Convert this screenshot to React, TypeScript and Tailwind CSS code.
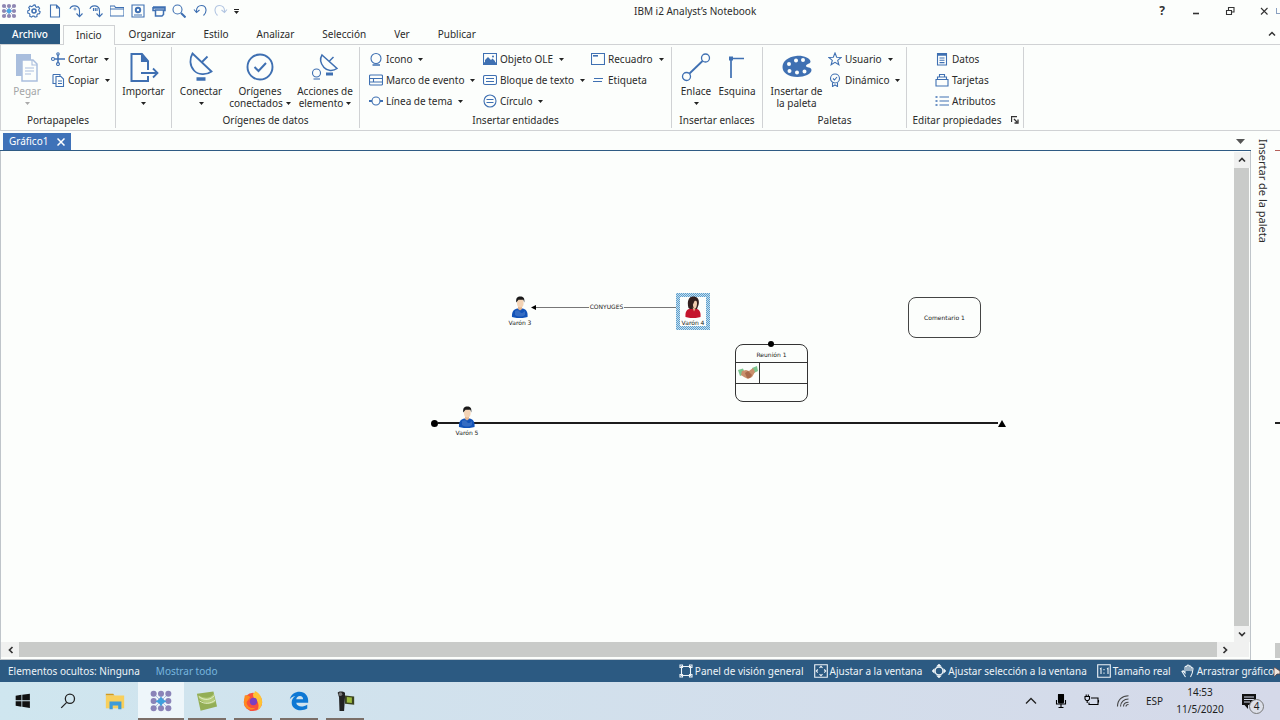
import type { ReactNode } from 'react';

interface IconProps {
  size?: number;
  box?: number;
  className?: string;
  children: ReactNode;
}

function Icon({ size = 14, box = 14, className = 'text-[#3f70b2]', children }: IconProps) {
  return (
    <svg
      width={size}
      height={size}
      viewBox={`0 0 ${box} ${box}`}
      fill="none"
      stroke="currentColor"
      strokeWidth="1.1"
      aria-hidden="true"
      className={`shrink-0 ${className}`}
    >
      {children}
    </svg>
  );
}

function Caret({ className = 'text-[#222]' }: { className?: string }) {
  return (
    <svg width="5" height="3" viewBox="0 0 5 3" fill="currentColor" aria-hidden="true" className={`shrink-0 ${className}`}>
      <path d="M0 0h5L2.5 3z" />
    </svg>
  );
}

/* ---------- quick access bar ---------- */

const dots = [3, 8, 13];

function AppLogo({ size = 16 }: { size?: number }) {
  return (
    <svg width={size} height={size} viewBox="0 0 16 16" aria-hidden="true" className="shrink-0">
      <path d="M8 3v10M3 8h10M3 3l10 10M13 3L3 13" stroke="#a9b4d6" strokeWidth="1" />
      {dots.map((y) =>
        dots.map((x) => (
          <circle key={`${x}-${y}`} cx={x} cy={y} r="2.1" fill={x === 8 && y === 8 ? '#3d9be0' : '#8f87b3'} />
        ))
      )}
      <path d="M8 4.6l1 2.4 2.6 1-2.6 1-1 2.4-1-2.4-2.6-1 2.6-1z" fill="#49a7e6" />
    </svg>
  );
}

const quickActions = [
  {
    name: 'Opciones',
    icon: (
      <>
        <path d="M7 .9l1.2.2.4 1.6 1.2.6 1.5-.7 1.3 1.7-.9 1.3.2 1.4 1.3.8-.7 2-1.7.1-.9 1 .1 1.7-2 .6-1-1.2-1.3.1-1.2 1.1-1.8-1 .3-1.6-.7-1.1L.8 9l-.1-2.1 1.6-.7.3-1.3-.9-1.4 1.4-1.5 1.5.7 1.2-.6z" />
        <circle cx="7" cy="7" r="2" strokeWidth="1.6" />
      </>
    )
  },
  { name: 'Nuevo', icon: <path d="M2.5 1h6l3 3v9h-9zM8.5 1v3h3" /> },
  {
    name: 'Paso',
    icon: (
      <>
        <path d="M1 5C2 .6 10.500 .4 10.500 7v5M7.500 9.500l3 3.200 3-3.200" />
        <circle cx="6" cy="5" r="1" strokeWidth=".8" />
      </>
    )
  },
  { name: 'Todos los pasos', icon: <path d="M1 5C2 .6 10.500 .4 10.500 7v5M7.500 9.500l3 3.200 3-3.200M4.500 4v3M6.300 4v3M8 4v3" /> },
  { name: 'Abrir', icon: <path d="M0 12V2h4.500l1 1.500H14V12zM0 5h14" /> },
  {
    name: 'Guardar',
    icon: (
      <>
        <path d="M1 1h12v12H1zM3 11h8" />
        <circle cx="7" cy="6" r="2.200" strokeWidth="2" />
      </>
    )
  },
  { name: 'Imprimir', icon: <path d="M1 3h12v3.500h-1.500M1 3v3.500h2.500M1 4h12M3.500 6v6h6.500l1.500-1.500V6z" strokeWidth="1.500" /> },
  {
    name: 'Buscar',
    icon: (
      <>
        <circle cx="5.500" cy="5.500" r="4.500" />
        <path d="M9 9l4.500 4.500" strokeWidth="2" />
      </>
    )
  },
  { name: 'Deshacer', icon: <path d="M1 5.500l2.500 3 3-2.500M3.500 8C3 3 6 1.500 8.500 1.500c5 0 6 6.500 2 10" /> }
];

function TitleBar() {
  return (
    <header className="relative flex h-6 items-center pr-[10px] pb-0.5 pl-px">
      <AppLogo />
      <div className="ml-[10px] flex w-[201px] items-center justify-between">
        {quickActions.map((action) => (
          <button key={action.name} type="button" aria-label={action.name}>
            <Icon>{action.icon}</Icon>
          </button>
        ))}
        <button type="button" aria-label="Rehacer" disabled>
          <Icon className="text-[#b3c6e2]">
            <path d="M13 5.500l-2.500 3-3-2.500M10.500 8C11 3 8 1.500 5.500 1.500c-5 0-6 6.500-2 10" />
          </Icon>
        </button>
      </div>
      <button type="button" aria-label="Personalizar barra" className="ml-[6px] flex flex-col items-center gap-px">
        <span className="h-px w-[5px] bg-[#222]" />
        <Caret />
      </button>
      <h1 className="ml-[395px] whitespace-nowrap">IBM i2 Analyst’s Notebook</h1>
      <div className="ml-auto flex items-center gap-[22px] text-[#333]">
        <button type="button" className="w-3 text-xs font-bold">?</button>
        <button type="button" aria-label="Minimizar">
          <Icon size={12} box={12} className="text-[#333]"><path d="M3 8.500h6" strokeWidth="1.600" /></Icon>
        </button>
        <button type="button" aria-label="Restaurar">
          <Icon size={12} box={12} className="text-[#333]">
            <path d="M2.500 5.500h5v4h-5zM4.500 5V2.500H10V7H7.500" />
          </Icon>
        </button>
        <button type="button" aria-label="Cerrar">
          <Icon size={12} box={12} className="text-[#333]"><path d="M3 3l6.500 6.500M9.500 3L3 9.500" /></Icon>
        </button>
      </div>
      <span className="absolute top-2 right-0 h-1.5 w-1 border-l border-b border-[#8aa0c0]" />
    </header>
  );
}

const tabs = ['Organizar', 'Estilo', 'Analizar', 'Selección', 'Ver', 'Publicar'];

function RibbonTabs() {
  return (
    <nav className="flex h-[21px] items-stretch border-b border-[#d0d2d4] pr-1">
      <button type="button" className="w-[60px] bg-[#2b5a82] font-medium text-white">Archivo</button>
      <button type="button" className="relative top-px ml-[3px] border border-b-0 border-[#d0d2d4] bg-[#fcfefc] px-3">Inicio</button>
      <div className="flex">
        {tabs.map((tab) => (
          <button key={tab} type="button" className="px-3.5">{tab}</button>
        ))}
      </div>
      <button type="button" aria-label="Contraer la cinta" className="ml-auto">
        <Icon size={8} box={8} className="text-[#333]"><path d="M1 5.500l3-3 3 3" strokeWidth="1.500" /></Icon>
      </button>
    </nav>
  );
}

/* ---------- ribbon ---------- */

function Group({ title, width, launcher, children }: { title: string; width: string; launcher?: boolean; children: ReactNode }) {
  return (
    <section className={`flex shrink-0 flex-col border-r border-[#d0d2d4] pt-0.5 ${width}`}>
      <div className="flex flex-1">{children}</div>
      <div className="relative h-4 text-center leading-4">
        <span className={launcher ? 'pr-4' : ''}>{title}</span>
        {launcher && (
          <button type="button" aria-label="Abrir propiedades" className="absolute top-1 right-1">
            <Icon size={8} box={8} className="text-[#333]"><path d="M.5 6V.5H6M3 3l3 3M7 3.500V7H3.500" strokeWidth="1.300" /></Icon>
          </button>
        )}
      </div>
    </section>
  );
}

interface LargeProps {
  width: string;
  lines: string[];
  caret?: boolean;
  disabled?: boolean;
  children: ReactNode;
}

function LargeButton({ width, lines, caret, disabled, children }: LargeProps) {
  const caretColor = disabled ? 'text-[#aaa]' : 'text-[#222]';
  return (
    <button
      type="button"
      disabled={disabled}
      className={`flex flex-col items-center pt-0.5 leading-3 whitespace-nowrap ${width} ${disabled ? 'text-[#a3a5a6]' : ''}`}
    >
      <span className="mb-0.5 flex h-8 items-center justify-center">{children}</span>
      <span>{lines[0]}</span>
      {lines.length > 1 ? (
        <span className="flex items-center gap-[3px]">
          {lines[1]}
          {caret && <Caret className={caretColor} />}
        </span>
      ) : (
        caret && <span className="flex h-3 items-center"><Caret className={caretColor} /></span>
      )}
    </button>
  );
}

function SmallButton({ label, caret, children }: { label: string; caret?: boolean; children: ReactNode }) {
  return (
    <button type="button" className="flex h-5 items-center whitespace-nowrap">
      <Icon>{children}</Icon>
      <span className="ml-[3px]">{label}</span>
      {caret && <span className="ml-1.5"><Caret /></span>}
    </button>
  );
}

function Ribbon() {
  return (
    <div className="flex h-[86px] items-stretch overflow-hidden border-b border-l border-[#d0d2d4] py-0.5">
      <Group title="Portapapeles" width="w-[115px]">
        <LargeButton width="w-[50px] pl-0.5" lines={['Pegar']} caret disabled>
          <Icon size={30} box={30} className="text-[#a9bedd]">
            <path d="M4 2h15v22H4z" fill="#a9bedd" stroke="none" />
            <path d="M10 8h11l4 4v17H10z" fill="#fcfefc" strokeWidth="1.500" />
            <path d="M20 8v5h5M13 16h9M13 19h9M13 22h6" />
          </Icon>
        </LargeButton>
        <div className="flex flex-col gap-px">
          <SmallButton label="Cortar" caret>
            <path d="M3.500 7H14M7 2.500v9" strokeWidth="1.500" />
            <circle cx="2" cy="7" r="1.500" />
            <circle cx="7" cy="12" r="1.500" />
            <circle cx="7" cy="2" r="1.200" />
          </SmallButton>
          <SmallButton label="Copiar" caret>
            <path d="M2 1.500h7v2M2 1.500v9h2.500M5 3.500h5l2.500 2.500v7.500H5zM7 8h4M7 10.500h4" />
          </SmallButton>
        </div>
      </Group>

      <Group title="" width="w-14">
        <LargeButton width="w-full" lines={['Importar']} caret>
          <Icon size={30} box={30}>
            <path d="M19 24v5H2.500V2H13l6 7v9" strokeWidth="2" />
            <path d="M12.500 2l6.500 7.500h-6.500z" fill="currentColor" />
            <path d="M12 21h16M24 16.500l4.500 4.500-4.500 4.500" strokeWidth="1.800" />
          </Icon>
        </LargeButton>
      </Group>

      <Group title="Orígenes de datos" width="w-[188px]">
        <LargeButton width="ml-px w-14" lines={['Conectar']} caret>
          <Icon size={30} box={30}>
            <path d="M6.500 1.500L25.500 19.500C20 23.500 12 23 8 18.500 3.500 13.500 3.500 6.500 6.500 1.500zM15.500 10.500l6-6" strokeWidth="1.800" />
            <path d="M10.500 27h9" strokeWidth="3.500" />
          </Icon>
        </LargeButton>
        <LargeButton width="w-[62px]" lines={['Orígenes', 'conectados']} caret>
          <Icon size={30} box={30}>
            <circle cx="15" cy="15" r="12.500" strokeWidth="1.900" />
            <path d="M9.500 15l4 4 7.500-8" strokeWidth="2" />
          </Icon>
        </LargeButton>
        <LargeButton width="w-[68px]" lines={['Acciones de', 'elemento']} caret>
          <Icon size={30} box={30}>
            <path d="M12 3l15 13.500c-4 3-10 2.500-13-1S9.500 7 12 3zM19 9.500l4.500-4.500" strokeWidth="1.500" />
            <path d="M16 22h7" strokeWidth="3" />
            <circle cx="6.500" cy="21" r="4" />
            <path d="M3.500 27h6.500" />
          </Icon>
        </LargeButton>
      </Group>

      <Group title="Insertar entidades" width="w-[312px]">
        <div className="ml-[9px] grid grid-cols-[114px_108px_auto] content-start gap-y-px">
          <SmallButton label="Icono" caret>
            <circle cx="7" cy="6.500" r="5" />
            <path d="M3.500 13h7.500" strokeWidth="1.500" />
          </SmallButton>
          <SmallButton label="Objeto OLE" caret>
            <path d="M.5 1.500h13v11H.5z" />
            <path d="M2 11V8l3-3 3 3 1.500-1.500L12 9v2z" fill="currentColor" stroke="none" />
            <path d="M.5 11.500h13" strokeWidth="2.500" />
            <circle cx="10" cy="4.500" r="1" fill="currentColor" stroke="none" />
          </SmallButton>
          <SmallButton label="Recuadro" caret>
            <path d="M.5 1.500h13v11H.5z" />
            <path d="M2 3.800h5" strokeWidth="1.600" />
          </SmallButton>
          <SmallButton label="Marco de evento" caret>
            <rect x=".5" y="2" width="13" height="10" rx="1" />
            <path d="M.5 5.500h13M.5 9h13M4.500 5.500V9" />
          </SmallButton>
          <SmallButton label="Bloque de texto" caret>
            <rect x=".5" y="2.500" width="13" height="9" rx="1.500" />
            <path d="M3 5.500h8M3 8.500h8" />
          </SmallButton>
          <SmallButton label="Etiqueta">
            <path d="M3 5.500h9M2 8.500h9" />
          </SmallButton>
          <SmallButton label="Línea de tema" caret>
            <circle cx="7" cy="7" r="4" />
            <path d="M0 7h3M11 7h3" strokeWidth="1.800" />
          </SmallButton>
          <SmallButton label="Círculo" caret>
            <circle cx="7" cy="7" r="6" />
            <path d="M3.500 5.500h7M3.500 8.500h7" />
          </SmallButton>
        </div>
      </Group>

      <Group title="Insertar enlaces" width="w-[91px]">
        <LargeButton width="ml-1 w-10" lines={['Enlace']} caret>
          <Icon size={30} box={30}>
            <circle cx="24.500" cy="6" r="4" strokeWidth="1.300" />
            <circle cx="5.500" cy="24.500" r="4" strokeWidth="1.300" />
            <path d="M8.500 21.500l13-12.500" strokeWidth="1.800" />
          </Icon>
        </LargeButton>
        <LargeButton width="w-[42px]" lines={['Esquina']}>
          <Icon size={30} box={30}>
            <path d="M9 26V6.500H22" strokeWidth="1.700" />
            <path d="M7 4.500h4v4H7z" fill="currentColor" stroke="none" />
          </Icon>
        </LargeButton>
      </Group>

      <Group title="Paletas" width="w-[144px]">
        <LargeButton width="ml-0.5 w-[63px]" lines={['Insertar de', 'la paleta']}>
          <Icon size={30} box={30}>
            <path
              fillRule="evenodd"
              d="M14 4c7-.8 14 2 14.500 5.500.2 2.500-4.500 2.200-4.500 4.500 0 2 5.500.5 5.500 4 0 4-7 7-14 7C6 25 .5 20.500 .5 15S6 5 14 4zM14 6.500a2 2 0 100 4 2 2 0 000-4zM21 6a2 2 0 100 4 2 2 0 000-4zM7 10a2 2 0 100 4 2 2 0 000-4zM7.500 17a2 2 0 100 4 2 2 0 000-4zM15 18.500a2 2 0 100 4 2 2 0 000-4zM22.500 17.500a2 2 0 100 4 2 2 0 000-4z"
              fill="currentColor"
              stroke="none"
            />
          </Icon>
        </LargeButton>
        <div className="flex flex-col gap-px">
          <SmallButton label="Usuario" caret>
            <path d="M7 1l1.700 4.200 4.500.3-3.500 2.900 1.200 4.400L7 10.400l-3.900 2.400 1.200-4.400L.8 5.500l4.500-.3z" />
          </SmallButton>
          <SmallButton label="Dinámico" caret>
            <circle cx="7" cy="5.500" r="4.500" />
            <path d="M5 5.500l1.500 1.500 2.500-3M4.500 9.500v4L7 12l2.500 1.500v-4" />
          </SmallButton>
        </div>
      </Group>

      <Group title="Editar propiedades" width="w-[117px]" launcher>
        <div className="ml-7 flex flex-col gap-px">
          <SmallButton label="Datos">
            <path d="M2.500 1.500h9v11.500h-9zM4.500 6h5M4.500 8.300h5M4.500 10.600h5" />
            <path d="M2.500 2.500h9" strokeWidth="2.500" />
          </SmallButton>
          <SmallButton label="Tarjetas">
            <path d="M1 6.500h12V13H1zM2.500 6.500V4h9v2.500M4.500 4V1.500h5V4" />
          </SmallButton>
          <SmallButton label="Atributos">
            <path d="M4.500 3H14M4.500 7H14M4.500 11H14" />
            <path d="M.5 3h2M.5 7h2M.5 11h2" strokeWidth="1.500" />
          </SmallButton>
        </div>
      </Group>
    </div>
  );
}

/* ---------- chart ---------- */

function Man() {
  return (
    <svg width="18" height="22" viewBox="0 0 18 22" aria-hidden="true">
      <path d="M1 21C.5 15.500 3 13 6.500 12.500h5c3.500.5 5.500 3 5 8.500-4 1.500-11.500 1.500-15.500 0z" fill="#1253b8" />
      <path d="M4 15c2-1.500 4-1 5 1s3 1 5-1v4c-3 2-7 2-10 0z" fill="#fff" opacity=".15" />
      <path d="M7 9h4v4L9 14.500 7 13z" fill="#e3b48e" />
      <ellipse cx="9.300" cy="7" rx="3.300" ry="4.500" fill="#f3d3b5" />
      <path d="M5.300 6.500C4.600 2 6.500 .5 9.300 .5S14 2 13.200 6.500l-.8-2.700H7.500z" fill="#1a1a1a" />
    </svg>
  );
}

function Woman() {
  return (
    <svg width="18" height="22" viewBox="0 0 18 22" aria-hidden="true">
      <path d="M1.500 21C1 15.500 3 13 6.500 12.500h5c3.500.5 5.500 3 5 8.500-4 1.500-11 1.500-15 0z" fill="#c4142c" />
      <path d="M4.500 12C2.500 5 5 .5 9 .5s7 2.500 5.500 8.500L13 13H6z" fill="#33201f" />
      <path d="M10.500 5c1.500-1 2.800 0 2.500 3s-1.200 4.500-2.200 4.500-2-2-1.800-4z" fill="#f0cdb0" />
      <path d="M8.500 11.500l3 1-1.500 3z" fill="#e3b48e" />
    </svg>
  );
}

function Entity({ position, label, children }: { position: string; label: string; children: ReactNode }) {
  return (
    <div className={`absolute flex w-[34px] flex-col items-center ${position}`}>
      {children}
      <span className="leading-[10px] whitespace-nowrap">{label}</span>
    </div>
  );
}

function Chart() {
  return (
    <main className="relative min-w-0 flex-1 overflow-hidden font-['DejaVu_Sans',sans-serif] text-[6px] text-[#222]">
      {/* marriage link */}
      <div className="absolute top-[151px] left-[530px] flex w-[146px] items-center">
        <svg width="5" height="5" viewBox="0 0 5 5" aria-hidden="true"><path d="M0 2.500L5 0v5z" /></svg>
        <span className="h-px flex-1 bg-[#777]" />
        <span className="px-px leading-[10px]">CONYUGES</span>
        <span className="h-px flex-1 bg-[#777]" />
      </div>

      {/* theme line */}
      <div className="absolute top-[268px] left-[430px] flex w-[575px] items-center">
        <span className="size-[7px] rounded-full bg-black" />
        <span className="h-0.5 flex-1 bg-[#1c1c1c]" />
        <svg width="8" height="8" viewBox="0 0 8 8" aria-hidden="true"><path d="M0 8L4 1l4 7z" /></svg>
      </div>

      <Entity position="top-[145px] left-[502px]" label="Varón 3"><Man /></Entity>
      <div className="absolute top-[142px] left-[675px] h-[37px] w-[34px] bg-[repeating-conic-gradient(#5c9fcd_0_25%,#c6dfef_0_50%)] bg-size-[2px_2px] p-1">
        <div className="h-full bg-[#fcfefc]" />
      </div>
      <Entity position="top-[145px] left-[675px]" label="Varón 4"><Woman /></Entity>
      <Entity position="top-[255px] left-[449px]" label="Varón 5"><Man /></Entity>

      {/* event frame */}
      <div className="absolute top-[193px] left-[734px] flex h-[58px] w-[73px] flex-col rounded-lg border border-[#333]">
        <span className="absolute -top-1 left-8 size-[6px] rounded-full bg-black" />
        <div className="flex h-[17px] items-center justify-center pt-0.5">Reunión 1</div>
        <div className="flex h-[22px] border-y border-[#333]">
          <div className="flex w-6 items-center justify-center border-r border-[#333]">
            <svg width="20" height="16" viewBox="0 0 20 16" aria-hidden="true">
              <path d="M0 5l5-1.500 2 5L2 11z" fill="#7cc58e" />
              <path d="M14 3l5-2 1 5-4 2z" fill="#7cc58e" />
              <path d="M4 6l4-1 3 1 4-3 2 4-3 5-4 2-4-2-3-2z" fill="#c98f6c" />
              <path d="M7 8l3-2 4 4-2 3-3 0z" fill="#a9694b" />
            </svg>
          </div>
        </div>
      </div>

      {/* text block */}
      <div className="absolute top-[146px] left-[907px] flex h-[41px] w-[73px] items-center justify-center rounded-lg border border-[#444]">
        Comentario 1
      </div>
    </main>
  );
}

function ScrollArrow({ name, d }: { name: string; d: string }) {
  return (
    <button type="button" aria-label={name} className="flex size-4 shrink-0 items-center justify-center bg-[#f0f1f0]">
      <Icon size={8} box={8} className="text-[#333]"><path d={d} strokeWidth="1.700" /></Icon>
    </button>
  );
}

function Workspace() {
  return (
    <div className="flex min-h-0 flex-1">
      <div className="flex min-w-0 flex-1 flex-col">
        <div className="flex h-5 shrink-0 items-center border-b border-[#2f5b84] pt-0.5 pr-1.5 pl-[3px]">
          <div className="flex h-full w-[68px] items-center bg-[#3f72b8] px-1.5 text-white">
            <span>Gráfico1</span>
            <button type="button" aria-label="Cerrar Gráfico1" className="ml-auto">
              <Icon size={8} box={8} className="text-white"><path d="M.5 .5l7 7M7.500 .5l-7 7" strokeWidth="1.500" /></Icon>
            </button>
          </div>
          <button type="button" aria-label="Lista de gráficos" className="ml-auto">
            <svg width="9" height="5" viewBox="0 0 9 5" fill="#555" aria-hidden="true"><path d="M0 0h9L4.500 5z" /></svg>
          </button>
        </div>
        <div className="flex min-h-0 flex-1 flex-col border-x border-b border-[#bfc5ca] pr-px pb-0.5">
          <div className="flex min-h-0 flex-1">
            <Chart />
            <div className="flex w-[15px] flex-col items-center pt-px">
              <ScrollArrow name="Subir" d="M1 5.500l3-3 3 3" />
              <div className="w-full flex-1 bg-[#c9cbc9]" />
              <ScrollArrow name="Bajar" d="M1 2.500l3 3 3-3" />
            </div>
          </div>
          <div className="flex h-[15px] shrink-0 items-center overflow-hidden bg-[#f0f1f0] pr-4 pl-0.5">
            <ScrollArrow name="Izquierda" d="M5.500 1l-3 3 3 3" />
            <div className="h-full flex-1 bg-[#c9cbc9]" />
            <ScrollArrow name="Derecha" d="M2.500 1l3 3-3 3" />
          </div>
        </div>
      </div>
      <aside className="flex w-6 items-start justify-center pt-2">
        <button type="button" className="text-[11px] [writing-mode:vertical-rl]">Insertar de la paleta</button>
      </aside>
      <div className="flex w-[5px] flex-col pt-[19px] pb-0.5">
        <span className="h-px bg-[#b5605a]" />
        <span className="mt-[271px] h-0.5 bg-[#222]" />
        <span className="mt-auto h-[15px] bg-[#c9cbc9]" />
      </div>
    </div>
  );
}

/* ---------- status bar ---------- */

const statusActions = [
  {
    label: 'Panel de visión general',
    icon: <path d="M2.500 2.500h9v9h-9zM1 1h2.500v2.500H1zM10.500 1H13v2.500h-2.500zM1 10.500h2.500V13H1zM10.500 10.500H13V13h-2.500z" />
  },
  {
    label: 'Ajustar a la ventana',
    icon: <path d="M.7.7h12.600v12.600H.7zM5.500 3.800l1.500-1.500 1.500 1.500M5.500 10.200l1.500 1.500 1.500-1.500M3.800 5.500L2.300 7l1.500 1.500M10.200 5.500l1.500 1.500-1.500 1.500" />
  },
  {
    label: 'Ajustar selección a la ventana',
    icon: (
      <>
        <circle cx="7" cy="7" r="4" strokeWidth="1.500" />
        <path d="M5.500 2L7 .5 8.500 2zM5.500 12L7 13.500 8.500 12zM2 5.500L.5 7 2 8.500zM12 5.500L13.500 7 12 8.500z" fill="currentColor" />
      </>
    )
  },
  {
    label: 'Tamaño real',
    icon: <path d="M.7.7h12.600v12.600H.7zM3 5l1-.7V10M10 5l1-.7V10M7 5v1.200M7 8.500v1.200" />
  },
  {
    label: 'Arrastrar gráfico',
    icon: <path d="M4.500 13L1 7.500l1.200-.7L4 9V3.200C4.500 2 5.700 2 6 3.200V7M6 3V1.800c.5-1.200 2-1 2 0V7M8 2.500c.5-1 2-.7 2 .5v4.200M10 4c.7-.8 2-.3 2 .8-.2 3-1 6-2.500 8.200" />
  }
];

function StatusBar() {
  return (
    <footer className="flex h-[22px] shrink-0 items-center bg-[#2c5a82] whitespace-nowrap text-[#eef4f8]">
      <span className="ml-2">Elementos ocultos: Ninguna</span>
      <a href="#mostrar" className="ml-4 text-[#78b6df]">Mostrar todo</a>
      <div className="ml-auto flex items-center gap-2.5">
        {statusActions.map((action) => (
          <button key={action.label} type="button" className="flex items-center gap-0.5">
            <Icon className="text-[#eef4f8]">{action.icon}</Icon>
            {action.label}
          </button>
        ))}
      </div>
      <svg width="6" height="16" viewBox="0 0 6 16" aria-hidden="true">
        <path d="M0 4v10l3-3h3V8z" fill="#f2e6dd" stroke="#5a4340" strokeWidth=".8" />
      </svg>
    </footer>
  );
}

/* ---------- taskbar ---------- */

const apps = [
  {
    name: 'Inicio de Windows',
    icon: <path d="M4 6.300L10.300 5.300v6H4zM11.200 5.200L19.500 4v7.300h-8.300zM4 12.200h6.300v6L4 17.300zM11.200 12.200h8.300v7.300l-8.300-1.200z" fill="#111" />
  },
  {
    name: 'Búsqueda',
    icon: (
      <>
        <circle cx="13" cy="9.500" r="5" stroke="#222" strokeWidth="1.400" fill="none" />
        <path d="M9.500 13.500l-6 6" stroke="#222" strokeWidth="1.400" />
      </>
    )
  },
  {
    name: 'Explorador de archivos',
    icon: (
      <>
        <path d="M2 4h8l1.500 2H2z" fill="#d29b1e" />
        <path d="M2 6h20v14H2z" fill="#f8cf5b" />
        <path d="M6 12.500h13V21h-3.500v-4h-6v4H6z" fill="#3d9bd8" />
      </>
    )
  },
  {
    name: "Analyst's Notebook",
    active: true,
    icon: (
      <>
        <path d="M5 5l14 14M19 5L5 19M12 4v16M4 12h16" stroke="#a9b8dc" />
        {[4, 12, 20].map((y) =>
          [4, 12, 20].map((x) => <circle key={`${x}-${y}`} cx={x} cy={y} r="3.300" fill="#8a83b8" />)
        )}
        <path d="M12 7l2 3 4 2.500-4 2L12 18l-2-3.500-4-2 4-2.500z" fill="#3fa0dd" />
      </>
    )
  },
  {
    name: 'Camtasia',
    active: false,
    icon: (
      <>
        <path d="M1 4L19 1.500l4 16.500-18 4.500z" fill="#93ae55" />
        <path d="M3 6c7 4 13 3 16.500-2L21 13C14 17 8 14 3 9z" fill="#b4cb7a" />
        <path d="M3 7c6 5 13 4 17-1M4 12c6 4 12 3 17-1" stroke="#e6f0cb" fill="none" />
      </>
    )
  },
  {
    name: 'Firefox',
    active: false,
    icon: (
      <>
        <circle cx="12" cy="13" r="10" fill="#f7503c" />
        <path d="M12 4c2-1 2-2 2-3 5 2 8 7 8 12 0 4-2 7-5 9 2-5 1-9-2-12-2 0-3-3-3-6z" fill="#ffc233" />
        <path d="M3 6c2-1 5 0 6 2l-4 5c0 5 5 8 10 6-5 5-13 1-13-6z" fill="#ff8a1e" />
        <circle cx="12.500" cy="12.500" r="4" fill="#7a3fc0" />
      </>
    )
  },
  {
    name: 'Edge',
    active: false,
    icon: (
      <path
        d="M2 10C3.500 4.500 8 2 12.500 2 18.500 2 22 6.500 22 11.500V14H9c.3 3 3 4 5.500 4 2.300 0 4.500-.8 6.500-2v4.300c-2 1.200-4.500 1.700-7 1.700C8 22 4 18.500 4 13.500c0-3 1.500-5.500 4-7-3 .5-5 2-6 3.500zM9 10h7.500c0-2-1.200-3.500-3.500-3.500S9.300 8 9 10z"
        fill="#0e78d4"
        fillRule="evenodd"
      />
    )
  },
  {
    name: 'Grabadora',
    active: false,
    icon: (
      <>
        <path d="M4 3c1-2 6-2 8 0v5l-1 15H6L5.500 8z" fill="#222" />
        <circle cx="7" cy="4.500" r="2" fill="#777" />
        <path d="M12 6l10 1v9l-10-1z" fill="#3c4420" />
        <path d="M14 7.500l5.500.7v6l-5.500-.6z" fill="#9dbb3e" />
      </>
    )
  }
];

function Taskbar() {
  return (
    <div className="flex h-[38px] shrink-0 items-stretch bg-linear-to-r from-[#cfe6ef] to-[#d5d9e9] text-[#1d1d1d]">
      {apps.map((app) => (
        <button
          key={app.name}
          type="button"
          aria-label={app.name}
          className={`flex w-[46px] flex-col items-center pt-2 ${app.active ? 'bg-[#eef6fa]' : ''}`}
        >
          <svg width="22" height="22" viewBox="0 0 24 24" fill="none" aria-hidden="true">{app.icon}</svg>
          {app.active !== undefined && (
            <span className={`mt-auto h-0.5 bg-[#7b6f68] ${app.active ? 'w-full' : 'w-[38px]'}`} />
          )}
        </button>
      ))}
      <div className="ml-auto flex items-center pr-4">
        <div className="flex items-center gap-4 pr-2.5">
          <button type="button" aria-label="Iconos ocultos">
            <Icon className="text-[#222]"><path d="M2 9.500l5-5 5 5" strokeWidth="1.300" /></Icon>
          </button>
          <button type="button" aria-label="Micrófono">
            <Icon className="text-black">
              <rect x="4.500" y="0" width="5" height="9" rx="1" fill="currentColor" />
              <path d="M2.500 6v4h9V6M7 10v3.500M4.500 13.500h5" />
            </Icon>
          </button>
          <button type="button" aria-label="Batería">
            <Icon size={16} box={16} className="text-black">
              <path d="M7 5h7v6.500H5V9.500M14.500 7v2.500" />
              <path d="M1 3.500h4.500V6L4.300 7.500H2.200L1 6zM2.200 1.500v2M4.300 1.500v2M3.200 7.500V10" />
            </Icon>
          </button>
          <button type="button" aria-label="Red">
            <Icon className="text-[#444]">
              <path d="M1.500 12.500C1.500 6 6 1.800 12.500 1.800M4.500 12.500c0-4.500 3.500-7.500 8-7.500M7.500 12.500c0-2.500 2-4.300 5-4.300M10 12.500c0-1 1-2 2.500-2" />
            </Icon>
          </button>
          <button type="button">ESP</button>
        </div>
        <time className="w-[54px] text-center leading-[17px]">14:53<br />11/5/2020</time>
        <button type="button" aria-label="Notificaciones" className="relative ml-3.5 pr-1.5">
          <svg width="17" height="17" viewBox="0 0 17 17" aria-hidden="true">
            <path d="M1 1h14v11H7v4l-3.500-4H1z" fill="#111" />
            <path d="M3 4h10M3 6.500h10M3 9h6" stroke="#d5d9e9" />
          </svg>
          <span className="absolute top-[6px] right-0 flex size-[15px] items-center justify-center rounded-full border border-[#777] bg-[#dcdfe8]">4</span>
        </button>
      </div>
    </div>
  );
}

export default function App() {
  return (
    <div className="flex h-screen flex-col overflow-hidden bg-[#fcfefc] font-['Noto_Sans',sans-serif] text-[10px] text-[#2b2b2b]">
      <TitleBar />
      <RibbonTabs />
      <Ribbon />
      <Workspace />
      <StatusBar />
      <Taskbar />
    </div>
  );
}
